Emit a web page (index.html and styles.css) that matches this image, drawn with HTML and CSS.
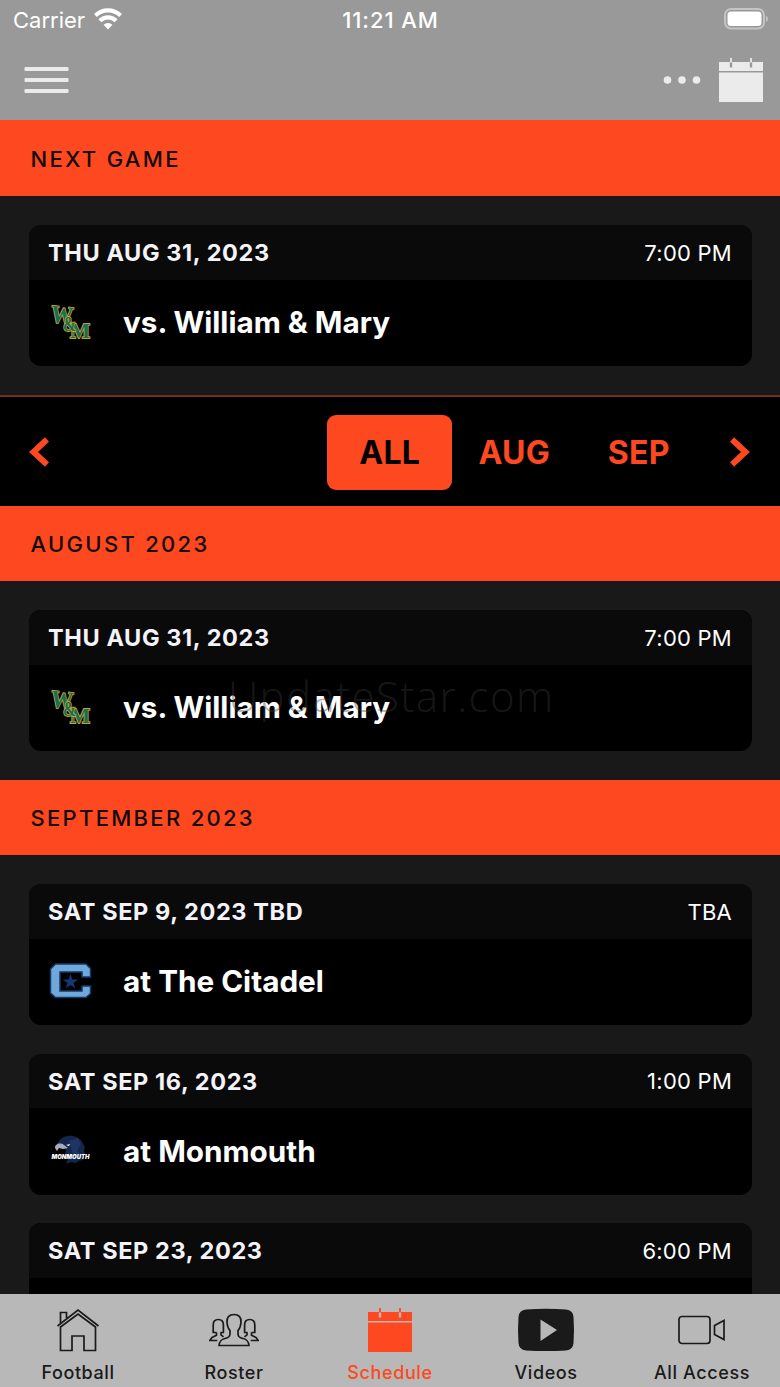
FILE: index.html
```html
<!DOCTYPE html>
<html lang="en">
  <head>
    <meta charset="utf-8">
    <title>Schedule</title>
    <link rel="stylesheet" href="styles.css">
  </head>
  <body>
    <svg class="defs" width="0" height="0">
      <symbol id="calendar" viewBox="0 0 44 44">
        <path fill="currentColor" d="M0 4h10.800v5.500h2.400V4h17.600v5.500h2.400V4H44v9H0zM0 14.500h44V44H0z" />
        <path fill="currentColor" d="M11.100 0h1.800v4.500h-1.800zM31.100 0h1.800v4.500h-1.800z" />
      </symbol>
    </svg>

    <header class="topbar">
      <div class="status">
        <div class="carrier">
          <span>Carrier</span>
          <svg width="28" height="22" viewBox="0 0 28 22" fill="none" stroke="#fff" stroke-width="4.200">
            <path d="M1.400 7.500a18 18 0 0 1 25.200 0" />
            <path d="M5.900 12.700a11.700 11.700 0 0 1 16.200 0" />
            <path d="M14 21.500l-4.400-4.800a6.500 6.500 0 0 1 8.800 0z" fill="#fff" stroke="none" />
          </svg>
        </div>
        <div class="clock">11:21 AM</div>
        <svg class="battery" width="44" height="22" viewBox="0 0 44 22">
          <rect x="1" y="1" width="39" height="19.500" rx="6" fill="none" stroke="#c4c4c4" stroke-width="2" />
          <rect x="3.500" y="3.500" width="34" height="14.500" rx="3.500" fill="#fff" />
          <path d="M42 7.500q2 1.200 2 3.300t-2 3.300z" fill="#c4c4c4" />
        </svg>
      </div>
      <nav class="navbar">
        <svg width="45" height="26" viewBox="0 0 45 26" fill="#ebebeb">
          <rect x=".5" width="44" height="4" rx="1" />
          <rect x=".5" y="11" width="44" height="4" rx="1" />
          <rect x=".5" y="22" width="44" height="4" rx="1" />
        </svg>
        <div class="actions">
          <svg width="38" height="8" viewBox="0 0 38 8" fill="#ebebeb">
            <circle cx="4.500" cy="4" r="3.800" />
            <circle cx="19" cy="4" r="3.800" />
            <circle cx="33.500" cy="4" r="3.800" />
          </svg>
          <svg width="44" height="44"><use href="#calendar" /></svg>
        </div>
      </nav>
    </header>

    <main class="content">
      <h2 class="section-title next">Next Game</h2>
      <div class="games">
        <article class="card">
          <div class="card-head"><span class="date">THU AUG 31, 2023</span><span class="time">7:00 PM</span></div>
          <div class="card-body">
            <svg class="logo wm" viewBox="0 0 44 36">
              <text x="2" y="19" font-size="25" textLength="22" lengthAdjust="spacingAndGlyphs" transform="rotate(6 12 12)">W</text>
              <text x="21" y="34" font-size="22" textLength="20" lengthAdjust="spacingAndGlyphs">M</text>
              <text x="14" y="26.500" font-size="22" textLength="13" lengthAdjust="spacingAndGlyphs">&amp;</text>
            </svg>
            <span>vs. William &amp; Mary</span>
          </div>
        </article>
      </div>

      <div class="months">
        <svg width="20" height="30" viewBox="0 0 20 30" fill="none" stroke="#fe4820" stroke-width="6"><path d="M18 2.500 4.500 15 18 27.500" /></svg>
        <div class="month-list">
          <button class="month active">ALL</button>
          <button class="month">AUG</button>
          <button class="month">SEP</button>
        </div>
        <svg width="20" height="30" viewBox="0 0 20 30" fill="none" stroke="#fe4820" stroke-width="6"><path d="M2 2.500 15.500 15 2 27.500" /></svg>
      </div>

      <h2 class="section-title">August 2023</h2>
      <div class="games">
        <article class="card">
          <div class="card-head"><span class="date">THU AUG 31, 2023</span><span class="time">7:00 PM</span></div>
          <div class="card-body">
            <svg class="logo wm" viewBox="0 0 44 36">
              <text x="2" y="19" font-size="25" textLength="22" lengthAdjust="spacingAndGlyphs" transform="rotate(6 12 12)">W</text>
              <text x="21" y="34" font-size="22" textLength="20" lengthAdjust="spacingAndGlyphs">M</text>
              <text x="14" y="26.500" font-size="22" textLength="13" lengthAdjust="spacingAndGlyphs">&amp;</text>
            </svg>
            <span>vs. William &amp; Mary</span>
          </div>
        </article>
      </div>

      <h2 class="section-title">September 2023</h2>
      <div class="games">
        <article class="card">
          <div class="card-head"><span class="date">SAT SEP 9, 2023 TBD</span><span class="time">TBA</span></div>
          <div class="card-body">
            <svg class="logo" viewBox="0 0 44 36">
              <path d="M6.500 1H37l4.500 4.500V14H33V9H11v19h22v-5h8.500v7.500L37 34.500H6.500L1.500 30V6z" fill="#70a8dc" stroke="#123a68" stroke-width="1.500" />
              <path d="m21.500 11 1.900 5.500h5.700l-4.500 3.400 1.700 5.400-4.800-3.200-4.800 3.200 1.700-5.400-4.500-3.400h5.700z" fill="#143874" />
            </svg>
            <span>at The Citadel</span>
          </div>
        </article>
        <article class="card">
          <div class="card-head"><span class="date">SAT SEP 16, 2023</span><span class="time">1:00 PM</span></div>
          <div class="card-body">
            <svg class="logo" viewBox="0 0 44 36">
              <path d="M8 12C10 5 17 2 24 3c5 1 9 4 10 8l2 3-1 3 1 4-3 3 1 3-5 1-2 2-5-1-5 2 2-5-3-4 1-5z" fill="#14264c" />
              <path d="m20 8 9-3 3 6-4 7 4 4-6 3-3-6z" fill="#1e3462" />
              <path d="M6 15c0-4 5-6 9-3l4 3-5 1-4-1-2 3z" fill="#a5abb8" />
              <path d="m17 12 4-1-1 2z" fill="#fff" />
              <text x="2.500" y="26" font-size="6.500" font-weight="900" font-style="italic" font-family="Inter, sans-serif" textLength="38" lengthAdjust="spacingAndGlyphs" fill="#fff">MONMOUTH</text>
            </svg>
            <span>at Monmouth</span>
          </div>
        </article>
        <article class="card">
          <div class="card-head"><span class="date">SAT SEP 23, 2023</span><span class="time">6:00 PM</span></div>
          <div class="card-body"></div>
        </article>
      </div>
      <div class="watermark">UpdateStar.com</div>
    </main>

    <nav class="tabbar">
      <a class="tab">
        <svg width="44" height="44" viewBox="0 0 44 44" fill="none" stroke="#1a1a1a" stroke-width="1.700">
          <path d="M1.500 18 22 2l20.500 16M4.500 15V4.500h6V10M4.500 19v23.500H16V28h12v14.500h11.500V19L22 6z" />
        </svg>
        <span>Football</span>
      </a>
      <a class="tab">
        <svg width="50" height="44" viewBox="0 0 50 44" fill="none" stroke="#1a1a1a" stroke-width="1.700" stroke-linejoin="round">
          <path d="M25 6.500c-5 0-7.500 3-7 8 .3 4 1.500 6.500 3 8v3c0 3-1 4-5 5s-5.500 2.500-6 7h30c-.5-4.500-2-6-6-7s-5-2-5-5v-3c1.500-1.500 2.700-4 3-8 .5-5-2-8-7-8z" />
          <path d="M14 24.500h-2v2.300l2.500 2M7.500 24.500H4.200V17c0-3.500 2-5.500 5.100-5.500s5.100 2 5.100 5.500v7.500h-2M7.500 24.500v2.800L3 29.500.8 32.500h7.500" />
          <path d="M36 24.500h2v2.300l-2.500 2M42.500 24.500h3.300V17c0-3.500-2-5.500-5.100-5.500s-5.100 2-5.100 5.500v7.500h2M42.500 24.500v2.800l4.500 2.200 2.200 3h-7.500" />
        </svg>
        <span>Roster</span>
      </a>
      <a class="tab selected">
        <svg width="44" height="44"><use href="#calendar" /></svg>
        <span>Schedule</span>
      </a>
      <a class="tab">
        <svg width="58" height="44" viewBox="0 0 58 44">
          <path fill="#1a1a1a" fill-rule="evenodd" d="M9 1.500q20-1.500 40 0 7 .5 7.500 7.500 1 13 0 26-.5 7-7.500 7.500-20 1.200-40 0-7-.5-7.500-7.500-1-13 0-26Q2 2 9 1.500zM23.500 11.500v21.500L40 22z" />
        </svg>
        <span>Videos</span>
      </a>
      <a class="tab">
        <svg width="48" height="44" viewBox="0 0 48 44" fill="none" stroke="#1a1a1a" stroke-width="1.700">
          <rect x="1" y="8.500" width="31" height="27" rx="3" />
          <path d="M36.500 17.500 46 12.500v19l-9.500-5z" />
        </svg>
        <span>All Access</span>
      </a>
    </nav>
  </body>
</html>
```

FILE: styles.css
```css
* {
  box-sizing: border-box;
}
body {
  margin: 0;
  height: 1387px;
  display: flex;
  flex-direction: column;
  overflow: hidden;
  background: #191919;
  color: #fff;
  font-family: Inter, "Liberation Sans", sans-serif;
}
svg {
  display: block;
  flex: none;
}
.defs {
  position: absolute;
}
.topbar {
  height: 120px;
  flex: none;
  background: #999;
}
.status {
  height: 40px;
  padding: 0 12px 0 13px;
  display: grid;
  grid-template-columns: 1fr auto 1fr;
  align-items: center;
  font-size: 22px;
}
.carrier {
  display: flex;
  align-items: center;
  gap: 9px;
}
.carrier svg {
  margin-top: -3px;
}
.clock {
  font-weight: 500;
  letter-spacing: 0.9px;
}
.battery {
  justify-self: end;
  margin-top: -2px;
}
.navbar {
  height: 80px;
  padding: 0 17px 0 24px;
  display: flex;
  align-items: center;
  justify-content: space-between;
  color: #ebebeb;
}
.actions {
  display: flex;
  align-items: center;
  gap: 18px;
}
.content {
  flex: 1;
  min-height: 0;
  overflow: hidden;
  position: relative;
}
.section-title {
  margin: 0;
  height: 75px;
  padding-left: 30.5px;
  display: flex;
  align-items: center;
  background: #fe4820;
  color: #120907;
  font-size: 22px;
  font-weight: 450;
  letter-spacing: 2.3px;
  text-transform: uppercase;
}
.section-title.next {
  height: 76px;
  padding-top: 2px;
}
.games {
  padding: 29px 28.5px 29px 28.5px;
  display: flex;
  flex-direction: column;
  gap: 28.5px;
}
.card {
  height: 141px;
  flex: none;
  border-radius: 12px;
  overflow: hidden;
  background: #000;
}
.card-head {
  height: 54.5px;
  padding: 1px 19.5px 0;
  display: flex;
  align-items: center;
  justify-content: space-between;
  background: #0a0a0a;
}
.date {
  color: #f3f3f8;
  font-size: 23.5px;
  font-weight: 650;
  letter-spacing: 0.6px;
}
.time {
  font-size: 22px;
  letter-spacing: 0.25px;
}
.card-body {
  height: 86px;
  padding: 0 0 1px 20px;
  display: flex;
  align-items: center;
  gap: 30.5px;
  font-size: 29.7px;
  font-weight: 650;
}
.logo {
  width: 44px;
  height: 36px;
}
.wm {
  overflow: visible;
  fill: #14705a;
  stroke: #c4a22c;
  stroke-width: 1.8px;
  paint-order: stroke;
  font-family: "Liberation Serif", serif;
  font-weight: bold;
}
.months {
  height: 111px;
  padding: 0 30px 0 29px;
  display: flex;
  align-items: center;
  border-top: 2px solid #70301f;
  background: #000;
}
.month-list {
  flex: 1;
  padding: 2px 29.5px 0 0;
  display: flex;
  justify-content: flex-end;
}
.month {
  width: 124.5px;
  height: 75px;
  padding: 0 0 0 1px;
  border: none;
  border-radius: 9px;
  background: transparent;
  color: #fe4820;
  font-family: inherit;
  font-size: 32px;
  font-weight: 700;
  letter-spacing: 0.3px;
}
.month.active {
  background: #fe4820;
  color: #000;
}
.watermark {
  position: absolute;
  top: 547px;
  left: 228px;
  color: rgba(60, 60, 60, 0.4);
  font-family: "Open Sans", sans-serif;
  font-size: 42px;
  font-weight: 300;
  line-height: 58px;
  letter-spacing: 1.4px;
}
.tabbar {
  height: 93px;
  flex: none;
  padding-top: 14px;
  display: grid;
  grid-template-columns: repeat(5, 1fr);
  background: #b8b8b8;
  color: #1a1a1a;
}
.tab {
  display: flex;
  flex-direction: column;
  align-items: center;
  gap: 9px;
  font-size: 18px;
  font-weight: 500;
  line-height: 24px;
  letter-spacing: 0.6px;
}
.tab.selected {
  color: #fe4820;
}
```
